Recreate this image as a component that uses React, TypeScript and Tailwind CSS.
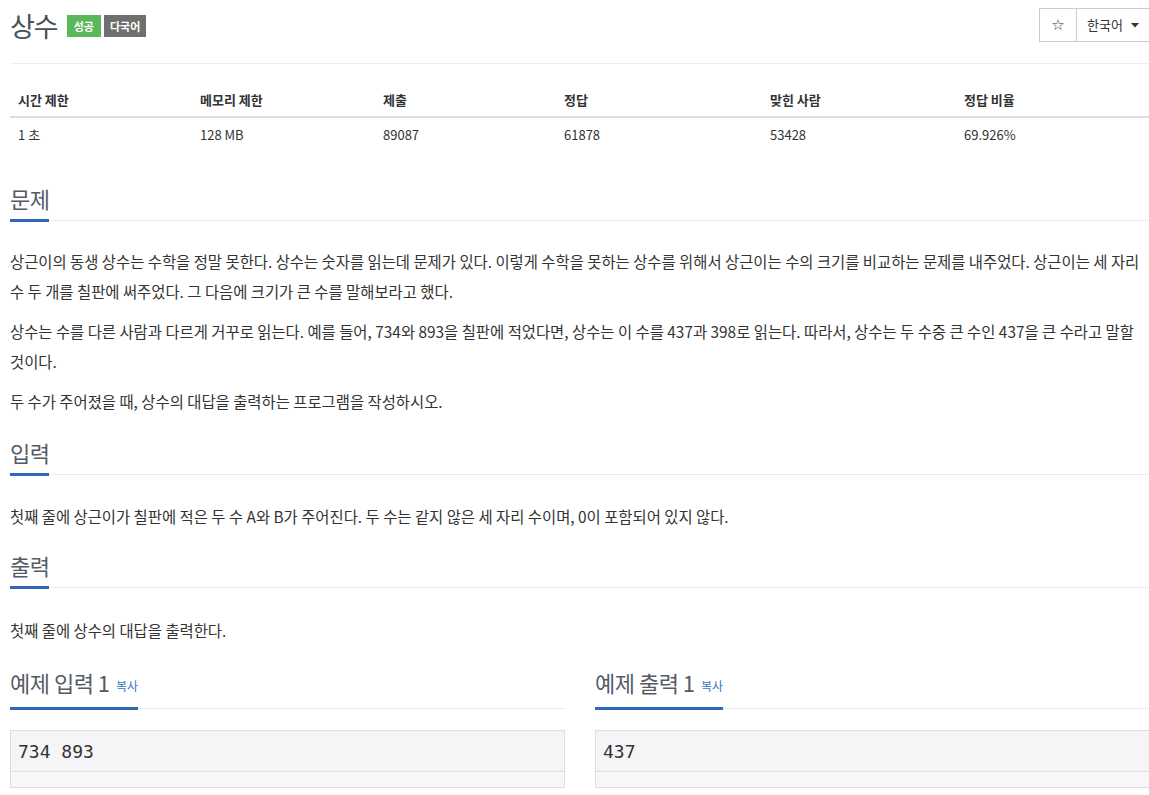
const font = { fontFamily: '"Noto Sans CJK KR", "Noto Sans", sans-serif' }

const stats = [
  { label: "시간 제한", value: "1 초", w: "w-[182px]" },
  { label: "메모리 제한", value: "128 MB", w: "w-[183px]" },
  { label: "제출", value: "89087", w: "w-[181px]" },
  { label: "정답", value: "61878", w: "w-[206px]" },
  { label: "맞힌 사람", value: "53428", w: "w-[194px]" },
  { label: "정답 비율", value: "69.926%", w: "" },
]

function SectionTitle({ children, className = "" }: { children: React.ReactNode; className?: string }) {
  return (
    <div className={`flex items-end ${className}`}>
      <div className="border-b-[3px] border-[#2f69b8] pb-[6px] -mb-px">
        <h2 className="text-[22px] leading-[30px] text-[#555b66] tracking-[-0.5px]">{children}</h2>
      </div>
      <div className="flex-1 border-b border-dotted border-[#d6d9e0]" />
    </div>
  )
}

function Sample({ title, value }: { title: string; value: string }) {
  return (
    <div className="flex-1 min-w-0">
      <SectionTitle>
        {title} <span className="text-[12px] text-[#3478c6] ml-0.5 align-middle tracking-normal">복사</span>
      </SectionTitle>
      <div className="mt-[21px] border border-[#dcdde2] bg-[#f5f5f7]">
        <div
          className="px-[7px] h-[41px] flex items-center text-[18px] text-[#333] whitespace-pre border-b border-[#dcdde2]"
          style={{ fontFamily: '"DejaVu Sans Mono", monospace' }}
        >
          {value}
        </div>
        <div className="h-[15px] bg-[#f7f7f8]" />
      </div>
    </div>
  )
}

export default function App() {
  return (
    <div className="bg-white min-h-screen text-[#333] pl-[10px] overflow-hidden" style={font}>
      <div className="w-[1140px]">
        {/* header */}
        <div className="flex items-start justify-between pt-[8px] pb-[20px] border-b border-[#eeeeee]">
          <div className="flex items-center gap-[3px] pt-[1px]">
            <h1 className="text-[27px] leading-[34px] text-[#4a4f58] tracking-[-1px] mr-[6px]">상수</h1>
            <span className="bg-[#5cb85c] text-white text-[11px] font-bold h-[22px] px-[7px] flex items-center">성공</span>
            <span className="bg-[#6f6f6f] text-white text-[11px] font-bold h-[22px] px-[6px] flex items-center">다국어</span>
          </div>
          <div className="flex h-[34px] mr-[-1px]">
            <button
              className="w-[38px] border border-[#ccc] flex items-center justify-center text-[#333] text-[15px]"
              style={{ fontFamily: '"DejaVu Sans", sans-serif' }}
            >
              ☆
            </button>
            <button className="w-[74px] border border-l-0 border-[#ccc] flex items-center pl-[10px] gap-[8px] text-[13px] text-[#333]">
              한국어
              <svg width="8" height="5" viewBox="0 0 8 5"><path d="M0 0h8L4 4.5z" fill="#333" /></svg>
            </button>
          </div>
        </div>

        {/* stats table */}
        <table className="w-full mt-[18px] text-[13px] text-left border-collapse">
          <thead>
            <tr className="border-b-2 border-[#dddddd]">
              {stats.map((s) => (
                <th key={s.label} className={`${s.w} px-[8px] pt-[8px] pb-[6px] leading-[20px] font-bold text-[#333]`}>
                  {s.label}
                </th>
              ))}
            </tr>
          </thead>
          <tbody>
            <tr>
              {stats.map((s) => (
                <td key={s.label} className="px-[8px] py-[7px] leading-[20px] text-[#333]">{s.value}</td>
              ))}
            </tr>
          </tbody>
        </table>

        {/* 문제 */}
        <SectionTitle className="mt-[31px]">문제</SectionTitle>
        <div className="mt-[25px] text-[15.4px] leading-[30px] text-[#333] space-y-[10px] break-keep">
          <p>
            상근이의 동생 상수는 수학을 정말 못한다. 상수는 숫자를 읽는데 문제가 있다. 이렇게 수학을 못하는 상수를 위해서 상근이는 수의 크기를 비교하는 문제를 내주었다. 상근이는 세 자리 수 두 개를 칠판에 써주었다. 그 다음에 크기가 큰 수를 말해보라고 했다.
          </p>
          <p>
            상수는 수를 다른 사람과 다르게 거꾸로 읽는다. 예를 들어, 734와 893을 칠판에 적었다면, 상수는 이 수를 437과 398로 읽는다. 따라서, 상수는 두 수중 큰 수인 437을 큰 수라고 말할 것이다.
          </p>
          <p>두 수가 주어졌을 때, 상수의 대답을 출력하는 프로그램을 작성하시오.</p>
        </div>

        {/* 입력 */}
        <SectionTitle className="mt-[21px]">입력</SectionTitle>
        <p className="mt-[26px] text-[15.4px] leading-[30px] break-keep">
          첫째 줄에 상근이가 칠판에 적은 두 수 A와 B가 주어진다. 두 수는 같지 않은 세 자리 수이며, 0이 포함되어 있지 않다.
        </p>

        {/* 출력 */}
        <SectionTitle className="mt-[19px]">출력</SectionTitle>
        <p className="mt-[27px] text-[15.4px] leading-[30px] break-keep">첫째 줄에 상수의 대답을 출력한다.</p>

        {/* samples */}
        <div className="flex gap-[30px] mt-[22px]">
          <Sample title="예제 입력 1" value="734 893" />
          <Sample title="예제 출력 1" value="437" />
        </div>
      </div>
    </div>
  )
}
